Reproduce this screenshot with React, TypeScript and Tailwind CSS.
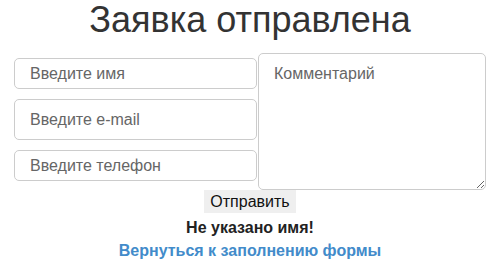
import React, { useState } from "react";

export default function App() {
  const [name, setName] = useState("");
  const [email, setEmail] = useState("");
  const [phone, setPhone] = useState("");
  const [comment, setComment] = useState("");

  const font = { fontFamily: '"Liberation Sans", Arial, sans-serif' };

  return (
    <div className="w-[500px] h-[273px] bg-white text-[#333] overflow-hidden" style={font}>
      <h1 className="text-center text-[36px] leading-[40px] font-normal text-[#333]">Заявка отправлена</h1>
      <div className="flex justify-center mt-[13px]">
        <div className="flex flex-col w-[243px] pt-[5px]">
          <input
            value={name}
            onChange={(e) => setName(e.target.value)}
            placeholder="Введите имя"
            className="h-[31px] border border-[#ccc] rounded-[5px] px-[15px] text-[16px] placeholder:text-[#666] outline-none"
          />
          <input
            value={email}
            onChange={(e) => setEmail(e.target.value)}
            placeholder="Введите e-mail"
            className="h-[41px] mt-[10px] border border-[#ccc] rounded-[5px] px-[15px] text-[16px] placeholder:text-[#666] outline-none"
          />
          <input
            value={phone}
            onChange={(e) => setPhone(e.target.value)}
            placeholder="Введите телефон"
            className="h-[31px] mt-[10px] border border-[#ccc] rounded-[5px] px-[15px] text-[16px] placeholder:text-[#666] outline-none"
          />
        </div>
        <textarea
          value={comment}
          onChange={(e) => setComment(e.target.value)}
          placeholder="Комментарий"
          className="w-[228px] h-[137px] ml-[1px] border border-[#ccc] rounded-[5px] px-[15px] py-[9px] text-[16px] leading-[22px] placeholder:text-[#666] outline-none"
        />
      </div>
      <div className="flex flex-col items-center">
        <button className="h-[23px] px-[6px] bg-[#efefef] text-[16px] leading-[21px] text-[#111]">Отправить</button>
        <p className="font-bold text-[16px] leading-[22px] mt-[4px] text-[#222]">Не указано имя!</p>
        <a href="#" className="font-bold text-[16px] leading-[22px] mt-[1px] text-[#428bca]">
          Вернуться к заполнению формы
        </a>
      </div>
    </div>
  );
}
